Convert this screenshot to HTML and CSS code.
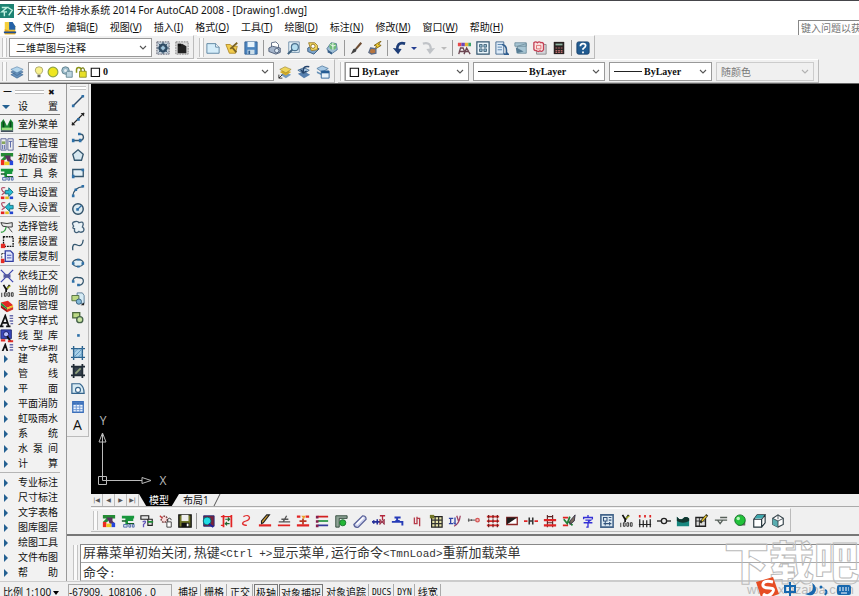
FILE: index.html
```html
<!DOCTYPE html>
<html lang="zh-CN">
<head>
<meta charset="utf-8">
<title>天正软件-给排水系统 2014 For AutoCAD 2008 - [Drawing1.dwg]</title>
<link rel="stylesheet" href="styles.css">
</head>
<body>
<svg class="defs" aria-hidden="true">
<symbol id="chev" viewBox="0 0 8 8"><path d="M1 2l3 3 3-3" fill="none" stroke="#555" stroke-width="1.1"/></symbol>
<symbol id="app" viewBox="0 0 16 16"><path d="M0 0h16v16H0z" fill="#1d8272"/><path d="M2 4h6L2 9h6M9 4l5 3-4 6M5 9v5" stroke="#bff0e0" stroke-width="1.6" fill="none"/></symbol>
<symbol id="doc" viewBox="0 0 16 16"><path d="M2 1h8l4 5v9H2z" fill="#f5cf3c"/><path d="M7 1h4l3 5v4H7z" fill="#2462a8"/><path d="M2 9l5 2 7 0v4H2z" fill="#e8a81c"/><path d="M1 13h14" stroke="#1e4f92" stroke-width="2"/></symbol>
<symbol id="gear" viewBox="0 0 16 16"><path d="M1 1h14v14H1z" fill="#c9d3dc" stroke="#556" stroke-dasharray="2 1"/><circle cx="8" cy="8" r="4" fill="none" stroke="#2c4963" stroke-width="2.5"/><path d="M8 1v14M1 8h14M3 3l10 10M13 3L3 13" stroke="#2c4963"/><circle cx="8" cy="8" r="2" fill="#9cc4de"/></symbol>
<symbol id="gearhome" viewBox="0 0 16 16"><path d="M1 1h14v14H1z" fill="#ddd" stroke="#777" stroke-dasharray="2 1"/><path d="M3 14V6l5-3 5 3v8z" fill="#222"/><path d="M3 3h4v3H3z" fill="#111"/></symbol>
<symbol id="new" viewBox="0 0 16 16"><path d="M1 3h10l4 4v7H1z" fill="#d5edfa" stroke="#557f9e"/><path d="M11 3v4h4" fill="#fff" stroke="#557f9e"/></symbol>
<symbol id="open" viewBox="0 0 16 16"><path d="M1 4h5l2 2h6l-2 8H5z" fill="#f1cb4c" stroke="#b08a2a"/><path d="M6 9l8-7M8 7l5 6" fill="none" stroke="#7c6423" stroke-width="2"/></symbol>
<symbol id="save" viewBox="0 0 16 16"><path d="M1 1h14v14H1z" fill="#4b84bf" stroke="#315f91"/><path d="M4 1h8v6H4z" fill="#e7f3fb"/><path d="M4 10h8v5H4z" fill="#cddfea"/><path d="M5 11h2v4H5z" fill="#315f91"/></symbol>
<symbol id="print" viewBox="0 0 16 16"><path d="M4 8V2l5-1 3 3v4" fill="#fff" stroke="#56657e"/><path d="M1 8l4-2 9 2v5l-5 2-8-3z" fill="#a4b4ca" stroke="#4a5a75"/><circle cx="10" cy="11" r="2.5" fill="#dbe7f2" stroke="#4a5a75"/></symbol>
<symbol id="preview" viewBox="0 0 16 16"><path d="M2 1h12v12H2z" fill="#e8f4fa" stroke="#6a8aa6"/><circle cx="9" cy="7" r="4" fill="#b5def0" stroke="#4b718f" stroke-width="1.4"/><path d="M6 10l-5 5" stroke="#3d607e" stroke-width="2.4"/></symbol>
<symbol id="publish" viewBox="0 0 16 16"><path d="M2 8l6-3 7 4-6 6-7-3z" fill="#7aa2c9" stroke="#38597d"/><path d="M3 2h7l3 3v5l-7 1z" fill="#f7dc60" stroke="#97782a"/><circle cx="8" cy="6" r="2.4" fill="#fff" stroke="#8a6d1c"/></symbol>
<symbol id="globe" viewBox="0 0 16 16"><path d="M2 9l5-7 6 1 1 7-7 5z" fill="#9dbdd5" stroke="#517799"/><circle cx="9" cy="6" r="4" fill="#6fbc77"/><path d="M6 4q3 3 6 1M9 2v8" stroke="#fff" fill="none"/><path d="M3 10l5 3v2l-5-2z" fill="#345b86"/></symbol>
<symbol id="brush" viewBox="0 0 16 16"><path d="M14 2L8 9" stroke="#6e4d33" stroke-width="2.4"/><path d="M9 8l-1 4-6 3 3-6z" fill="#444"/></symbol>
<symbol id="match" viewBox="0 0 16 16"><path d="M15 0L7 5l3 1-3 4 8-5-3-1z" fill="#f2cf33" stroke="#7c6012"/><path d="M3 8l6 1v5l-5 1-3-2z" fill="#b8763f" stroke="#596b89" stroke-width="1.500"/></symbol>
<symbol id="undo" viewBox="0 0 16 16"><path d="M15 3Q5 0 6 12" fill="none" stroke="#1e3d77" stroke-width="3"/><path d="M1 8l10 1-4 6z" fill="#1e3d77"/></symbol>
<symbol id="redo" viewBox="0 0 16 16"><path d="M1 3q10-3 9 9" fill="none" stroke="#c0c3c7" stroke-width="2.600"/><path d="M15 8L5 9l4 6z" fill="#c0c3c7"/></symbol>
<symbol id="down" viewBox="0 0 6 8"><path d="M0 3h6L3 6z" fill="#263f91"/></symbol>
<symbol id="downg" viewBox="0 0 6 8"><path d="M0 3h6L3 6z" fill="#bbb"/></symbol>
<symbol id="props" viewBox="0 0 16 16"><path d="M1 2h4v4H1z" fill="#e74949"/><path d="M5 2h4v4H5z" fill="#6a45bb"/><path d="M9 2h4v4H9z" fill="#eab532"/><path d="M13 2h3v4h-3z" fill="#3aa26a"/><path d="M2 15l2-7h3l2 5M8 15l3-7 4 7M2 12h12" fill="none" stroke="#6b4551" stroke-width="1.5"/></symbol>
<symbol id="dc" viewBox="0 0 16 16"><path d="M1 1h14v14H1z" fill="#eaf5fb" stroke="#34566f" stroke-width="1.4"/><path d="M4 4h3v3H4zM9 4h3v3H9zM4 9h3v3H4zM9 9h3v3H9z" fill="#91b8cb" stroke="#42647a"/></symbol>
<symbol id="tp" viewBox="0 0 16 16"><path d="M1 1h9v14H1z" fill="#dceaf7" stroke="#3f648c"/><path d="M3 4h5M3 7h5M3 10h5" stroke="#4f7dac"/><path d="M8 4q6 1 5 9l2 2h-5" fill="none" stroke="#315e8f" stroke-width="1.8"/></symbol>
<symbol id="sheet" viewBox="0 0 16 16"><path d="M1 2h13v4H1zM4 6l10-3v11H4z" fill="#a7c5d3" stroke="#71909f"/><path d="M2 7l9 5-8 2z" fill="#577d95"/></symbol>
<symbol id="markup" viewBox="0 0 16 16"><path d="M4 4h11v11H4z" fill="#d4d4da" stroke="#888"/><path d="M1 2q2-2 4 0 2-2 4 0 2-1 3 1v7q-2 3-4 1-2 2-4 0-3 0-3-2z" fill="#fbe4e4" stroke="#c44055" stroke-width="1.5"/><path d="M4 5h5v4H4z" fill="none" stroke="#d66"/></symbol>
<symbol id="calc" viewBox="0 0 16 16"><path d="M2 1h12v14H2z" fill="#292222"/><path d="M4 3h8v2H4z" fill="#8eb3a0"/><path d="M4 8h8M4 11h8M4 13h8" stroke="#b86b6b" stroke-width="1.4" stroke-dasharray="2 1"/></symbol>
<symbol id="help" viewBox="0 0 16 16"><rect x="1" y="1" width="14" height="14" rx="2" fill="#205b91" stroke="#173f69"/><path d="M5 6q0-3 3-3t3 2.5q0 1.5-3 3.500V10M8 12v2" fill="none" stroke="#fff" stroke-width="2"/></symbol>
<symbol id="layers" viewBox="0 0 16 16"><path d="M1 11l7-3 7 3-7 4zM1 8l7-3 7 3-7 4z" fill="#6590bb" stroke="#3d6691" stroke-width=".7"/><path d="M1 5l7-3 7 3-7 4z" fill="#b3d5ec" stroke="#5680a8" stroke-width=".7"/></symbol>
<symbol id="bulb" viewBox="0 0 12 16"><path d="M4 11Q1 8 1 5.500Q1 1 6 1t5 4.500Q11 8 8 11z" fill="#f8f18d" stroke="#9a9656"/><path d="M4 12h4v3H4z" fill="#666"/></symbol>
<symbol id="sun" viewBox="0 0 16 16"><circle cx="8" cy="8" r="6.500" fill="#efe61f" stroke="#8fa447" stroke-width="1.600"/></symbol>
<symbol id="vp" viewBox="0 0 16 16"><circle cx="6" cy="6" r="5" fill="#9dbccb" stroke="#4f7482"/><path d="M7 7h8v8H7z" fill="#bcd4df" stroke="#4f7482"/><circle cx="6" cy="6" r="2" fill="#e5eef2"/></symbol>
<symbol id="lock" viewBox="0 0 16 16"><path d="M2 9V5q0-3 3-3t3 3v3" fill="none" stroke="#8b9416" stroke-width="2"/><path d="M6 7h9v8H6z" fill="#e8df28" stroke="#7c801a"/><path d="M8 4q4-4 5 3" fill="none" stroke="#778017" stroke-width="1.500"/></symbol>
<symbol id="box" viewBox="0 0 16 16"><path d="M3 3h11v11H3z" fill="#fff" stroke="#111" stroke-width="1.5"/></symbol>
<symbol id="lay1" viewBox="0 0 16 16"><path d="M3 11l5-3 7 3-6 4z" fill="#7499bd"/><path d="M2 8l6-3 7 3-6 4z" fill="#d3aa26"/><path d="M2 5l6-3 7 3-6 4z" fill="#efd65c" stroke="#8c7423" stroke-width=".6"/><path d="M1 15l4-4M1 11v4h4" stroke="#222" fill="none"/></symbol>
<symbol id="lay2" viewBox="0 0 16 16"><path d="M1 10l7-3 7 4-7 4z" fill="#567fae"/><path d="M1 6l7-3 6 3-6 4z" fill="#aac9e4" stroke="#41698f"/><path d="M14 2q-7-2-7 6M4 5l3 4 4-2" fill="none" stroke="#23426b" stroke-width="1.7"/></symbol>
<symbol id="lay3" viewBox="0 0 16 16"><path d="M1 4l6-3 7 3-7 4z" fill="#a9cae5" stroke="#5c84a8"/><path d="M1 7l6 3v2L1 9z" fill="#6590b7"/><path d="M6 7h9v8H6z" fill="#e8f2fa" stroke="#245c94"/><path d="M6 8h9" stroke="#245c94" stroke-width="3"/></symbol>
<symbol id="tri" viewBox="0 0 8 10"><path d="M2 1l4 4-4 4z" fill="#246091"/></symbol>
<symbol id="trid" viewBox="0 0 8 10"><path d="M0 3h8L4 7z" fill="#246091"/></symbol>
<symbol id="s-out" viewBox="0 0 16 16"><path d="M1 14V5l3-4 4 8 4-8 3 4v9z" fill="#1c8a36"/><path d="M4 4v7M12 4v7" stroke="#0a461a" stroke-width="2"/><path d="M2 11h12v3H2z" fill="#96da7c"/><path d="M1 15h14" stroke="#123" stroke-width="1.5"/></symbol>
<symbol id="s-proj" viewBox="0 0 16 16"><path d="M1 2h6v13H1zM9 2h6v13H9z" fill="#eee" stroke="#515c93"/><path d="M2 5h4v3H2z" fill="#86a65b"/><path d="M3 9v5M5 9v5M10 5h4M12 5v7" stroke="#4c5ba4"/></symbol>
<symbol id="s-init" viewBox="0 0 16 16"><path d="M1 1h14v4H9L6 9H1l4-4H1z" fill="#248b34"/><path d="M5 4h7v4l3 3H9L7 7z" fill="#5a315e"/><path d="M1 9h4v6H1z" fill="#ec2b20"/><path d="M5 11h6v4H5z" fill="#f0cb20"/><path d="M11 10h4v5h-4z" fill="#2546dc"/></symbol>
<symbol id="s-tool" viewBox="0 0 16 16"><path d="M1 2h14v3H1zM5 5h9v3H8v4H5z" fill="#18963c"/><path d="M1 8h5M7 11h8" stroke="#135b27" stroke-width="1.5"/><path d="M3 12h4v3H3zM9 12h2v3H9zM13 12h2v3h-2z" fill="#d7e3ec" stroke="#4962a6"/></symbol>
<symbol id="s-exp" viewBox="0 0 16 16"><path d="M6 2Q1 1 2 4t3 3-3 3" fill="none" stroke="#b34f68" stroke-width="1.400"/><path d="M6 5h4V2l5 5-5 5V9H6z" fill="#28bad1" stroke="#126a79"/><path d="M1 12h4v3H1z" fill="#e32222"/><path d="M6 12h4v3H6z" fill="#e6bd1b"/><path d="M11 12h4v3h-4z" fill="#2244cf"/></symbol>
<symbol id="s-imp" viewBox="0 0 16 16"><path d="M6 2Q1 1 2 4t3 3-3 3" fill="none" stroke="#b34f68" stroke-width="1.400"/><path d="M15 5h-4V2L6 7l5 5V9h4z" fill="#28bad1" stroke="#126a79"/><path d="M1 12h4v3H1z" fill="#e32222"/><path d="M6 12h4v3H6z" fill="#e6bd1b"/><path d="M11 12h4v3h-4z" fill="#2244cf"/></symbol>
<symbol id="s-pick" viewBox="0 0 16 16"><path d="M1 3l7 1 6-1v5H9L3 7z" fill="#e8e8e8" stroke="#222"/><path d="M1 14q5 0 6-6" fill="none" stroke="#38a348" stroke-width="1.500"/><path d="M9 8l5 6" stroke="#333"/></symbol>
<symbol id="s-floor" viewBox="0 0 16 16"><path d="M4 2h11v11H4z" fill="none" stroke="#111" stroke-width="1.500" stroke-dasharray="2 1"/><path d="M1 10h5v5H1z" fill="#e32c24"/></symbol>
<symbol id="s-copy" viewBox="0 0 16 16"><path d="M2 4h7v9H2z" fill="#fff" stroke="#333" stroke-dasharray="2 1"/><path d="M6 1h6l3 3v9H6z" fill="#dfe4fb" stroke="#2f3ca2" stroke-width="1.500"/><path d="M8 6h5M8 9h5" stroke="#2f3ca2"/><path d="M1 10h4v5H1z" fill="#e32c24"/></symbol>
<symbol id="s-cross" viewBox="0 0 16 16"><path d="M1 1l14 14M15 1L1 15" stroke="#3d46af" stroke-width="1.500"/><path d="M4 6h8v4H4z" fill="#53599f"/></symbol>
<symbol id="s-scale" viewBox="0 0 16 16"><path d="M4 1l3 5M11 1L7 7v2" stroke="#111" stroke-width="2" fill="none"/><path d="M8 5l4-3" stroke="#a8b229" stroke-width="1.500"/><path d="M2 10v5M5 10h2v4H5zM9 10h2v4H9zM13 10h2v4h-2z" stroke="#222" fill="none"/></symbol>
<symbol id="s-lay" viewBox="0 0 16 16"><path d="M1 4l8-2 6 5-7 3z" fill="#df2822"/><path d="M1 4l7 6v2L1 7z" fill="#1a9638"/><path d="M8 10l7-3v2l-7 3z" fill="#efc722"/><path d="M1 7l7 5v3L1 10z" fill="#a11616"/><path d="M8 12l7-3v3l-7 3z" fill="#d53221"/></symbol>
<symbol id="s-text" viewBox="0 0 16 16"><path d="M1 14L6 2l4 12M3 10h6M0 14h4M7 14h5" fill="none" stroke="#111" stroke-width="2"/><path d="M11 2h4M11 5h4M11 8h4M12 11h3" stroke="#6668aa" stroke-width="1.500"/></symbol>
<symbol id="s-lib" viewBox="0 0 16 16"><path d="M1 1h12v10H1z" fill="#3947b9" stroke="#1e276f"/><circle cx="7" cy="6" r="3" fill="#bac1ff" stroke="#101556"/><path d="M8 8l4 6" stroke="#111" stroke-width="2"/><path d="M1 13h5M9 14h6" stroke="#e02c26" stroke-width="2.500"/></symbol>
<symbol id="d-line" viewBox="0 0 16 16"><path d="M2 14L14 2" stroke="#2b4866" stroke-width="1.600"/><path d="M1 12h3v3H1zM12 1h3v3h-3z" fill="#2e70a8"/></symbol>
<symbol id="d-xline" viewBox="0 0 16 16"><path d="M1 15L15 1" stroke="#222" stroke-width="1.600"/><path d="M1 11v4h4zM11 1h4v4z" fill="#222"/><path d="M7 7h3v3H7z" fill="#2e70a8"/></symbol>
<symbol id="d-pl" viewBox="0 0 16 16"><path d="M2 12h9q4-1 3-5-1-3-4-2" fill="none" stroke="#35576f" stroke-width="1.600"/><path d="M1 10h3v4H1zM9 10h3v4H9zM8 3h3v3H8z" fill="#2e70a8"/></symbol>
<symbol id="d-poly" viewBox="0 0 16 16"><path d="M8 2l6 5-2 7H4L2 7z" fill="#d7e7ef" stroke="#35576f" stroke-width="1.500"/></symbol>
<symbol id="d-rect" viewBox="0 0 16 16"><path d="M2 4h12v8H2z" fill="#e4f0f6" stroke="#35576f" stroke-width="1.500"/><path d="M1 10h3v4H1zM12 3h3v3h-3z" fill="#2e70a8"/></symbol>
<symbol id="d-arc" viewBox="0 0 16 16"><path d="M2 14Q3 4 14 3" fill="none" stroke="#35576f" stroke-width="1.500"/><path d="M1 12h3v3H1zM4 5h3v3H4zM12 1h3v3h-3z" fill="#2e70a8"/></symbol>
<symbol id="d-circ" viewBox="0 0 16 16"><circle cx="8" cy="8" r="6" fill="#dceaf0" stroke="#2f5068" stroke-width="1.600"/><path d="M7 9l5-5" stroke="#2e70a8" stroke-width="1.500"/><path d="M6 7h3v3H6z" fill="#2e70a8"/></symbol>
<symbol id="d-cloud" viewBox="0 0 16 16"><path d="M3 7Q0 3 4 2t5 1q5-2 5 2l-1 3q3 2 1 5-3 2-5 0-3 3-5 0l0-3Q1 10 3 7z" fill="#eaf2f6" stroke="#44627a" stroke-width="1.500"/></symbol>
<symbol id="d-spl" viewBox="0 0 16 16"><path d="M2 14Q1 5 7 8t7-6" fill="none" stroke="#35576f" stroke-width="1.500"/></symbol>
<symbol id="d-ell" viewBox="0 0 16 16"><ellipse cx="8" cy="8" rx="6" ry="4" fill="#e4f0f6" stroke="#35576f" stroke-width="1.500"/><path d="M1 7h3v3H1zM12 7h3v3h-3zM7 3h3v2H7zM7 11h3v2H7z" fill="#2e70a8"/></symbol>
<symbol id="d-ea" viewBox="0 0 16 16"><path d="M2 8q1-5 6-4 7 0 6 5-1 4-6 4" fill="none" stroke="#35576f" stroke-width="1.500"/><path d="M1 7h3v3H1zM7 11h3v3H7z" fill="#2e70a8"/></symbol>
<symbol id="d-ins" viewBox="0 0 16 16"><path d="M7 1h6l2 3v9H7z" fill="#d6ebf5" stroke="#527590"/><path d="M1 4h8v6H1z" fill="#bcd984" stroke="#4b693b"/><circle cx="9" cy="11" r="3" fill="#82b8d7" stroke="#315978"/><path d="M11 15l4-3v3z" fill="#222"/></symbol>
<symbol id="d-blk" viewBox="0 0 16 16"><path d="M2 3h8v6H2z" fill="#bcd984" stroke="#4b693b" stroke-width="1.500"/><circle cx="10" cy="11" r="3.500" fill="#c8e3a0" stroke="#44624a" stroke-width="1.500"/></symbol>
<symbol id="d-pt" viewBox="0 0 16 16"><path d="M7 7h3v3H7z" fill="#2e70a8"/></symbol>
<symbol id="d-hat" viewBox="0 0 16 16"><path d="M3 3h10v10H3z" fill="#a8d0e8"/><path d="M0 3h16M0 13h16M3 0v16M13 0v16" stroke="#2b638f" stroke-width="1.600"/><path d="M3 8l5-5M3 13L13 3M8 13l5-5" stroke="#5b93bf"/></symbol>
<symbol id="d-gra" viewBox="0 0 16 16"><path d="M3 3h10v10H3z" fill="#34404c"/><path d="M0 3h16M0 13h16M3 0v16M13 0v16" stroke="#202b35" stroke-width="2"/><path d="M5 11l6-6" stroke="#91a27b" stroke-width="2"/></symbol>
<symbol id="d-reg" viewBox="0 0 16 16"><path d="M1 13V2h9q5 3 5 11z" fill="#d7eaf3" stroke="#35648c" stroke-width="1.400"/><circle cx="8" cy="9" r="2.800" fill="#fff" stroke="#35648c" stroke-width="1.300"/></symbol>
<symbol id="d-tab" viewBox="0 0 16 16"><path d="M2 2h12v12H2z" fill="#eff6ff" stroke="#3b6fba" stroke-width="1.500"/><path d="M2 4h12" stroke="#3b6fba" stroke-width="3"/><path d="M2 8h12M2 11h12M6 4v10M10 4v10" stroke="#6994d2"/></symbol>
<symbol id="b3" viewBox="0 0 16 16"><path d="M1 2h9v4H1zM9 6h5v7H9z" fill="#e8e8e8" stroke="#222" stroke-width="1.300"/><path d="M9 9h6" stroke="#1f8b36" stroke-width="2"/><path d="M3 9q4-2 3 1l-2 2v3" fill="none" stroke="#6455bb" stroke-width="1.500"/></symbol>
<symbol id="b4" viewBox="0 0 16 16"><circle cx="6" cy="6" r="3.500" fill="#f8dcdc" stroke="#7c4343" stroke-dasharray="2 1" stroke-width="1.600"/><path d="M1 2l3 3" stroke="#c53636" stroke-width="1.500"/><path d="M9 9h5v6H9z" fill="#fff" stroke="#333"/><path d="M10 9V6q3-3 4 1" fill="none" stroke="#333"/></symbol>
<symbol id="b5" viewBox="0 0 16 16"><path d="M1 1h14v14H1z" fill="#70762a" stroke="#111" stroke-width="1.600"/><path d="M4 1h8v7H4z" fill="#eee"/><path d="M4 10h9v5H4z" fill="#111"/><path d="M10 11h2v3h-2z" fill="#fff"/></symbol>
<symbol id="b6" viewBox="0 0 16 16"><path d="M3 2h12v12H3z" fill="#7a2139" stroke="#222b77"/><circle cx="7" cy="8" r="4.500" fill="#20dce5" stroke="#0c5961"/><path d="M9 11l5 4" stroke="#20209c" stroke-width="2"/></symbol>
<symbol id="b7" viewBox="0 0 16 16"><path d="M4 1v14M13 1v14" stroke="#e22424" stroke-width="2"/><path d="M1 3h12M1 13h3" stroke="#e22424" stroke-width="1.500"/><path d="M6 6h5M6 11h5M9 4l2 2-2 2M8 9l-2 2 2 2" stroke="#1d682f" fill="none" stroke-width="1.300"/></symbol>
<symbol id="b8" viewBox="0 0 16 16"><path d="M5 3q6-3 7 1 0 3-4 4t-4 3q1 2 5 2" fill="none" stroke="#e12e2e" stroke-width="1.400"/></symbol>
<symbol id="b9" viewBox="0 0 16 16"><path d="M1 13h14" stroke="#e22424" stroke-width="2.500"/><path d="M13 1L6 10l-2 1V8l6-7z" fill="#d7a132" stroke="#222" stroke-width="1.300"/></symbol>
<symbol id="b10" viewBox="0 0 16 16"><path d="M1 13h14" stroke="#e22424" stroke-width="2"/><path d="M2 9h13M5 6h8M7 9l4-7" stroke="#555" stroke-width="1.500"/></symbol>
<symbol id="b11" viewBox="0 0 16 16"><path d="M1 3h4M11 3h4M1 13h14" stroke="#e22424" stroke-width="2.500"/><path d="M4 8h8M8 5v7" stroke="#b73723" stroke-width="2"/><path d="M6 2h5l-2 4z" fill="#eba028"/></symbol>
<symbol id="b12" viewBox="0 0 16 16"><path d="M3 3h12" stroke="#d32020" stroke-width="2"/><path d="M3 8h12" stroke="#299544" stroke-width="2"/><path d="M3 13h12" stroke="#333a99" stroke-width="2"/><path d="M1 2h3v3H1zM1 7h3v3H1zM1 12h3v3H1z" fill="#851f4e"/></symbol>
<symbol id="b13" viewBox="0 0 16 16"><path d="M2 15V2h13v3H6v10z" fill="#8fa396" stroke="#2c4536"/><circle cx="10" cy="10" r="3.500" fill="#24b736" stroke="#14702a"/></symbol>
<symbol id="b14" viewBox="0 0 16 16"><path d="M1 12L11 2q4 0 4 4L6 15q-4 1-5-3z" fill="#cdd2ee" stroke="#596198" stroke-width="1.400"/><path d="M4 12l8-8" stroke="#fff" stroke-width="2"/></symbol>
<symbol id="b15" viewBox="0 0 16 16"><path d="M0 9h10M2 7v4M6 6v6" stroke="#252e99" stroke-width="1.800"/><path d="M9 6v6l5-6v6z" fill="#cc5c74" stroke="#882b42"/><path d="M12 2v5M9 2h6" stroke="#b3263b" stroke-width="1.500"/></symbol>
<symbol id="b16" viewBox="0 0 16 16"><path d="M1 9h12v4M7 9V4M4 4h7M5 8h5" fill="none" stroke="#263bb7" stroke-width="2.200"/></symbol>
<symbol id="b17" viewBox="0 0 16 16"><path d="M5 4v7h3V3M8 5h3v9" fill="none" stroke="#b63b4a" stroke-width="1.500"/></symbol>
<symbol id="b18" viewBox="0 0 16 16"><path d="M3 3h12v12H3z" fill="#e7e4aa" stroke="#222" stroke-width="1.400"/><path d="M3 7h12M3 11h12M7 3v12M11 3v12" stroke="#333" stroke-width="1.400"/><path d="M1 1h5v4H1z" fill="#737627"/></symbol>
<symbol id="b19" viewBox="0 0 16 16"><path d="M1 5h5M3 5v6M1 11h5M8 4v8" stroke="#2f43a8" stroke-width="1.500"/><path d="M7 14Q13 11 14 2M10 2l2 6" fill="none" stroke="#9f4262" stroke-width="1.500"/><path d="M6 10l4 2" stroke="#2f43a8"/></symbol>
<symbol id="b20" viewBox="0 0 16 16"><path d="M1 7h9" stroke="#777" stroke-width="1.500"/><path d="M2 5v4M5 6v2" stroke="#444"/><circle cx="12" cy="7" r="2" fill="#f7baba" stroke="#d45757" stroke-width="1.500"/></symbol>
<symbol id="b21" viewBox="0 0 16 16"><path d="M1 3h14M1 8h14M1 13h14" stroke="#d92b2b" stroke-width="2"/><path d="M3 1v4M8 1v4M13 1v4M3 6v4M8 6v4M13 6v4M3 11v4M8 11v4M13 11v4" stroke="#722020" stroke-width="1.500"/></symbol>
<symbol id="b22" viewBox="0 0 16 16"><path d="M2 4h12v8H2z" fill="#fff" stroke="#8d2525" stroke-width="1.500"/><path d="M2 4h12L2 12z" fill="#211c1c"/></symbol>
<symbol id="b23" viewBox="0 0 16 16"><path d="M0 8h4M12 8h4" stroke="#df2424" stroke-width="2"/><path d="M6 4v8M10 4v8M6 8h4" stroke="#333" stroke-width="1.800"/></symbol>
<symbol id="b24" viewBox="0 0 16 16"><path d="M5 1v14M11 1v14M5 3h6M5 10h6" stroke="#5e2424" stroke-width="1.300"/><path d="M1 7h14M1 13h14" stroke="#df2424" stroke-width="2.500"/></symbol>
<symbol id="b25" viewBox="0 0 16 16"><path d="M1 4h6M1 13h6" stroke="#df2424" stroke-width="2"/><path d="M2 6l4 5 3-8M8 9l4 4" fill="none" stroke="#1f7d34" stroke-width="2"/><path d="M15 1L9 8v4l5-4z" fill="#7b6b5e" stroke="#332f44"/></symbol>
<symbol id="b26" viewBox="0 0 16 16"><path d="M8 1v2M3 6V4h10v2M5 7h6L8 9M3 10h10M8 9v6H6" fill="none" stroke="#3430d5" stroke-width="1.500"/></symbol>
<symbol id="b27" viewBox="0 0 16 16"><path d="M1 1h14v14H1z" fill="#ddeaf3" stroke="#43648a" stroke-width="1.800"/><path d="M4 4h4v4H4zM10 4h3M10 7h3M4 11h9M6 8v5M11 9v4" fill="none" stroke="#32537c" stroke-width="1.200"/></symbol>
<symbol id="b29" viewBox="0 0 16 16"><path d="M2 6v9M6 7v8M10 7v8M14 6v9M1 12h14" stroke="#222" stroke-width="1.400"/><path d="M1 1h2v3H1zM7 1h2v3H7zM13 1h2v3h-2z" fill="#df2424"/></symbol>
<symbol id="b30" viewBox="0 0 16 16"><path d="M0 8h16" stroke="#222" stroke-width="1.500"/><circle cx="8" cy="8" r="3" fill="#eee" stroke="#222" stroke-width="1.500"/></symbol>
<symbol id="b31" viewBox="0 0 16 16"><path d="M1 3q4 5 7 2t7 0v9H1z" fill="#17877f"/><path d="M1 3q4 5 7 2t7 0v3q-7 4-14 0z" fill="#12362f"/></symbol>
<symbol id="b32" viewBox="0 0 16 16"><path d="M1 4h11v10H1z" fill="#ddd" stroke="#222" stroke-width="1.500"/><path d="M1 8h11M5 4v10" stroke="#222"/><path d="M14 1L6 10" stroke="#2c2b19" stroke-width="3"/><path d="M13 2L8 8" stroke="#e7c431" stroke-width="1.500"/></symbol>
<symbol id="b33" viewBox="0 0 16 16"><path d="M1 7h14M4 7l3 4 3-4M7 4h8" fill="none" stroke="#57605a" stroke-width="1.500"/></symbol>
<symbol id="b34" viewBox="0 0 16 16"><path d="M5 13h9V8z" fill="#666"/><circle cx="8" cy="7" r="6" fill="#22c23a" stroke="#126c27"/><circle cx="6" cy="5" r="2" fill="#b7f5bb"/></symbol>
<symbol id="b35" viewBox="0 0 16 16"><path d="M2 6h9v9H2zM2 6l4-5h9l-4 5M15 1v9l-4 5" fill="#fff" stroke="#223239" stroke-width="1.300"/><path d="M3 5l3-4h8l-3 4z" fill="#3ba7ac"/></symbol>
<symbol id="b36" viewBox="0 0 16 16"><path d="M8 1l6 4v7l-6 3-6-3V5z" fill="#fff" stroke="#334148" stroke-width="1.300"/><path d="M2 5l6 3v7l-6-3z" fill="#59adb0"/><path d="M2 5l6 3 6-3M8 8v7M8 1v5" fill="none" stroke="#334148"/></symbol>
</svg>

<header class="titlebar"><svg class="i14"><use href="#app"/></svg><h1>天正软件-给排水系统 2014 For AutoCAD 2008 - [Drawing1.dwg]</h1></header>

<nav class="menubar">
<svg class="i14"><use href="#doc"/></svg>
<div class="menus">
<button>文件(<u>F</u>)</button><button>编辑(<u>E</u>)</button><button>视图(<u>V</u>)</button><button>插入(<u>I</u>)</button><button>格式(<u>O</u>)</button><button>工具(<u>T</u>)</button><button>绘图(<u>D</u>)</button><button>标注(<u>N</u>)</button><button>修改(<u>M</u>)</button><button>窗口(<u>W</u>)</button><button>帮助(<u>H</u>)</button>
</div>
<input class="ask" type="text" aria-label="键入问题以获取帮助" placeholder="键入问题以获取帮助">
</nav>

<div class="bars">
<div class="bar-row">
<div class="bar"><span class="grip"></span>
<div class="combo c-space"><select class="cn" aria-label="工作空间"><option>二维草图与注释</option></select><svg class="i8"><use href="#chev"/></svg></div>
<div class="icons tail"><button aria-label="工作空间设置"><svg><use href="#gear"/></svg></button><button aria-label="我的工作空间"><svg><use href="#gearhome"/></svg></button></div>
</div>
<div class="bar"><span class="grip"></span>
<div class="icons std"><button aria-label="新建"><svg><use href="#new"/></svg></button><button aria-label="打开"><svg><use href="#open"/></svg></button><button aria-label="保存"><svg><use href="#save"/></svg></button><i></i><button aria-label="打印"><svg><use href="#print"/></svg></button><button aria-label="打印预览"><svg><use href="#preview"/></svg></button><button aria-label="发布"><svg><use href="#publish"/></svg></button><button aria-label="三维"><svg><use href="#globe"/></svg></button><i></i><button aria-label="特性刷"><svg><use href="#brush"/></svg></button><button aria-label="块编辑"><svg><use href="#match"/></svg></button><i></i><button aria-label="放弃"><svg><use href="#undo"/></svg></button><button class="drop" aria-label="放弃列表"><svg><use href="#down"/></svg></button><button aria-label="重做"><svg><use href="#redo"/></svg></button><button class="drop" aria-label="重做列表"><svg><use href="#downg"/></svg></button><i></i><button aria-label="特性"><svg><use href="#props"/></svg></button><button aria-label="设计中心"><svg><use href="#dc"/></svg></button><button aria-label="工具选项板"><svg><use href="#tp"/></svg></button><button aria-label="图纸集"><svg><use href="#sheet"/></svg></button><button aria-label="标记集"><svg><use href="#markup"/></svg></button><button aria-label="计算器"><svg><use href="#calc"/></svg></button><i></i><button aria-label="帮助"><svg><use href="#help"/></svg></button></div>
</div>
</div>
<div class="bar-row">
<div class="bar"><span class="grip"></span>
<div class="icons first"><button aria-label="图层特性"><svg><use href="#layers"/></svg></button></div>
<div class="combo c-layer"><svg class="i12"><use href="#bulb"/></svg><svg class="i12"><use href="#sun"/></svg><svg class="i12"><use href="#vp"/></svg><svg class="i12"><use href="#lock"/></svg><svg class="i12"><use href="#box"/></svg><select aria-label="图层"><option>0</option></select><svg class="i8"><use href="#chev"/></svg></div>
<div class="icons tail"><button aria-label="置为当前"><svg><use href="#lay1"/></svg></button><button aria-label="上一个图层"><svg><use href="#lay2"/></svg></button><button aria-label="图层状态"><svg><use href="#lay3"/></svg></button></div>
</div>
<div class="bar"><span class="grip"></span>
<div class="combo c-color"><svg class="i12"><use href="#box"/></svg><select aria-label="颜色"><option>ByLayer</option></select><svg class="i8"><use href="#chev"/></svg></div>
<div class="combo c-type"><span class="rule long"></span><select aria-label="线型"><option>ByLayer</option></select><svg class="i8"><use href="#chev"/></svg></div>
<div class="combo c-weight"><span class="rule"></span><select aria-label="线宽"><option>ByLayer</option></select><svg class="i8"><use href="#chev"/></svg></div>
<div class="combo c-plot off"><select class="cn" aria-label="打印样式" disabled><option>随颜色</option></select><svg class="i8"><use href="#chev"/></svg></div>
</div>
</div>
</div>

<div class="main">
<aside class="side">
<div class="side-head"><button aria-label="最小化">━</button><span></span><button aria-label="关闭">✖</button></div>
<div class="top group"><button class="row"><svg class="mark"><use href="#trid"/></svg><span>设 置</span></button></div>
<div class="group"><button class="row"><svg><use href="#s-out"/></svg><span>室外菜单</span></button></div>
<div class="group"><button class="row"><svg><use href="#s-proj"/></svg><span>工程管理</span></button><button class="row"><svg><use href="#s-init"/></svg><span>初始设置</span></button><button class="row"><svg><use href="#s-tool"/></svg><span>工 具 条</span></button></div>
<div class="group"><button class="row"><svg><use href="#s-exp"/></svg><span>导出设置</span></button><button class="row"><svg><use href="#s-imp"/></svg><span>导入设置</span></button></div>
<div class="group"><button class="row"><svg><use href="#s-pick"/></svg><span>选择管线</span></button><button class="row"><svg><use href="#s-floor"/></svg><span>楼层设置</span></button><button class="row"><svg><use href="#s-copy"/></svg><span>楼层复制</span></button></div>
<div class="group cut"><button class="row"><svg><use href="#s-cross"/></svg><span>依线正交</span></button><button class="row"><svg><use href="#s-scale"/></svg><span>当前比例</span></button><button class="row"><svg><use href="#s-lay"/></svg><span>图层管理</span></button><button class="row"><svg><use href="#s-text"/></svg><span>文字样式</span></button><button class="row"><svg><use href="#s-lib"/></svg><span>线 型 库</span></button><button class="row part"><svg><use href="#s-text"/></svg><span>文字线型</span></button></div>
<div class="group"><button class="row"><svg class="mark"><use href="#tri"/></svg><span>建 筑</span></button><button class="row"><svg class="mark"><use href="#tri"/></svg><span>管 线</span></button><button class="row"><svg class="mark"><use href="#tri"/></svg><span>平 面</span></button><button class="row"><svg class="mark"><use href="#tri"/></svg><span>平面消防</span></button><button class="row"><svg class="mark"><use href="#tri"/></svg><span>虹吸雨水</span></button><button class="row"><svg class="mark"><use href="#tri"/></svg><span>系 统</span></button><button class="row"><svg class="mark"><use href="#tri"/></svg><span>水 泵 间</span></button><button class="row"><svg class="mark"><use href="#tri"/></svg><span>计 算</span></button></div>
<div class="group last"><button class="row"><svg class="mark"><use href="#tri"/></svg><span>专业标注</span></button><button class="row"><svg class="mark"><use href="#tri"/></svg><span>尺寸标注</span></button><button class="row"><svg class="mark"><use href="#tri"/></svg><span>文字表格</span></button><button class="row"><svg class="mark"><use href="#tri"/></svg><span>图库图层</span></button><button class="row"><svg class="mark"><use href="#tri"/></svg><span>绘图工具</span></button><button class="row"><svg class="mark"><use href="#tri"/></svg><span>文件布图</span></button><button class="row"><svg class="mark"><use href="#tri"/></svg><span>帮 助</span></button></div>
</aside>

<div class="right">
<div class="work">
<div class="draw">
<span class="hgrip"></span>
<button aria-label="直线"><svg><use href="#d-line"/></svg></button><button aria-label="构造线"><svg><use href="#d-xline"/></svg></button><button aria-label="多段线"><svg><use href="#d-pl"/></svg></button><button aria-label="正多边形"><svg><use href="#d-poly"/></svg></button><button aria-label="矩形"><svg><use href="#d-rect"/></svg></button><button aria-label="圆弧"><svg><use href="#d-arc"/></svg></button><button aria-label="圆"><svg><use href="#d-circ"/></svg></button><button aria-label="修订云线"><svg><use href="#d-cloud"/></svg></button><button aria-label="样条曲线"><svg><use href="#d-spl"/></svg></button><button aria-label="椭圆"><svg><use href="#d-ell"/></svg></button><button aria-label="椭圆弧"><svg><use href="#d-ea"/></svg></button><button aria-label="插入块"><svg><use href="#d-ins"/></svg></button><button aria-label="创建块"><svg><use href="#d-blk"/></svg></button><button aria-label="点"><svg><use href="#d-pt"/></svg></button><button aria-label="图案填充"><svg><use href="#d-hat"/></svg></button><button aria-label="渐变色"><svg><use href="#d-gra"/></svg></button><button aria-label="面域"><svg><use href="#d-reg"/></svg></button><button aria-label="表格"><svg><use href="#d-tab"/></svg></button><button class="mtext" aria-label="多行文字">A</button>
</div>
<div class="view">
<div class="canvas">
<svg class="ucs" viewBox="0 0 84 82"><g fill="none" stroke="#bbb"><path d="M7.500 64.500h8v8h-8zM11.500 68.500V22M11.500 68.500H51M11.500 21l-3.500 9h7zM60 68.500l-9-3v6z"/></g><text x="12" y="13">Y</text><text x="72" y="73">X</text></svg>
</div>
<div class="tabs"><button class="nav">|◀</button><button class="nav">◀</button><button class="nav">▶</button><button class="nav">▶|</button><button class="tab model">模型</button><button class="tab">布局1</button><svg class="slash" viewBox="0 0 8 12"><path d="M1 12L7 0" stroke="#555"/></svg></div>
<div class="bottom"><div class="bar"><span class="grip"></span>
<div class="icons wide"><button aria-label="初始设置"><svg><use href="#s-init"/></svg></button><button aria-label="工具条"><svg><use href="#s-tool"/></svg></button><button aria-label="图层转换"><svg><use href="#b3"/></svg></button><button aria-label="解锁"><svg><use href="#b4"/></svg></button><button aria-label="存盘"><svg><use href="#b5"/></svg></button><i></i><button aria-label="查询"><svg><use href="#b6"/></svg></button><button aria-label="间距"><svg><use href="#b7"/></svg></button><button aria-label="曲线"><svg><use href="#b8"/></svg></button><button aria-label="修改管线"><svg><use href="#b9"/></svg></button><button aria-label="管线标高"><svg><use href="#b10"/></svg></button><button aria-label="管线打断"><svg><use href="#b11"/></svg></button><button aria-label="多管线"><svg><use href="#b12"/></svg></button><button aria-label="立管"><svg><use href="#b13"/></svg></button><button aria-label="管道"><svg><use href="#b14"/></svg></button><button aria-label="阀门"><svg><use href="#b15"/></svg></button><button aria-label="水龙头"><svg><use href="#b16"/></svg></button><button aria-label="附件"><svg><use href="#b17"/></svg></button><button aria-label="材料表"><svg><use href="#b18"/></svg></button><button aria-label="系统图"><svg><use href="#b19"/></svg></button><button aria-label="喷头"><svg><use href="#b20"/></svg></button><button aria-label="喷淋布置"><svg><use href="#b21"/></svg></button><button aria-label="消火栓"><svg><use href="#b22"/></svg></button><button aria-label="断管"><svg><use href="#b23"/></svg></button><button aria-label="管径"><svg><use href="#b24"/></svg></button><button aria-label="标注刷"><svg><use href="#b25"/></svg></button><button aria-label="文字"><svg><use href="#b26"/></svg></button><button aria-label="图框"><svg><use href="#b27"/></svg></button><button aria-label="比例"><svg><use href="#s-scale"/></svg></button><button aria-label="尺寸"><svg><use href="#b29"/></svg></button><button aria-label="连接"><svg><use href="#b30"/></svg></button><button aria-label="水面"><svg><use href="#b31"/></svg></button><button aria-label="编辑表"><svg><use href="#b32"/></svg></button><button aria-label="标高"><svg><use href="#b33"/></svg></button><button aria-label="渲染"><svg><use href="#b34"/></svg></button><button aria-label="三维视图"><svg><use href="#b35"/></svg></button><button aria-label="轴测"><svg><use href="#b36"/></svg></button></div>
</div></div>
</div>
</div>
<div class="cmd"><span class="grip"></span>
<div class="cmd-box"><p>屏幕菜单初始关闭<code>,</code>热键<code>&lt;Ctrl +&gt;</code>显示菜单<code>,</code>运行命令<code>&lt;TmnLoad&gt;</code>重新加载菜单</p>
<div class="prompt"><label for="cmd">命令<code>:</code></label><input id="cmd" type="text"></div></div>
</div>
</div>
</div>

<footer class="status">
<button class="ratio">比例 1:100 <svg class="i8"><path d="M1 2h6L4 6z"/></svg></button>
<output class="coord">-67909,&nbsp; 108106 , 0</output>
<button>捕捉</button><button>栅格</button><button>正交</button><button class="on">极轴</button><button class="on">对象捕捉</button><button>对象追踪</button><button class="code">DUCS</button><button class="code">DYN</button><button>线宽</button>
</footer>

<div class="overlay">
<span class="site">www.xiazaiba.com</span>
<span class="mark-text">下载吧</span>
<div class="ime"><svg viewBox="0 0 100 22"><path d="M1 5l17-5 6 17-17 6z" fill="#e64d24"/><path d="M18 5q-9-2-10 2t6 4 3 5-9 1" fill="none" stroke="#fff" stroke-width="3"/><g fill="none" stroke="#1767ae" stroke-width="2"><path d="M30 9h10v6H30zM35 5v15"/></g><path d="M57 6q4 9-7 11 9 4 11-4 0-5-4-7z" fill="#1767ae"/><circle cx="66" cy="10" r="1.500" fill="#1767ae"/><path d="M70 13q3 1 0 5" stroke="#1767ae" stroke-width="2" fill="none"/><rect x="82" y="8" width="14" height="10" rx="2" fill="#1767ae"/><path d="M84 11h10M84 13h10" stroke="#fff" stroke-dasharray="2 1"/><path d="M86 16h6" stroke="#fff"/></svg></div>
</div>
</body>
</html>
```
FILE: styles.css
```css
* { box-sizing: border-box; }
body {
  margin: 0;
  height: 100vh;
  position: relative;
  display: flex;
  flex-direction: column;
  overflow: hidden;
  background: #f0f0f0;
  color: #111;
  font: 10px/15px "Noto Sans", "Noto Sans CJK SC", sans-serif;
}
button, input, select {
  margin: 0;
  padding: 0;
  border: 0;
  background: none;
  color: inherit;
  font: inherit;
}
button, svg { display: block; flex: none; }
.defs { position: absolute; width: 0; height: 0; }
.i14 { width: 14px; height: 14px; }
.i12 { width: 12px; height: 12px; }
.i8 { width: 8px; height: 8px; }

.titlebar {
  display: flex;
  align-items: center;
  gap: 3px;
  height: 20px;
  flex: none;
  border-top: 1px solid #45454a;
  background: #fff;
}
.titlebar h1 { margin: 0; font-size: 10px; font-weight: 400; white-space: nowrap; }
.menubar {
  display: flex;
  align-items: center;
  height: 15px;
  flex: none;
  padding-left: 3px;
  background: #fff;
}
.menus { display: flex; flex: 1; gap: 12px; padding-left: 6px; }
.menus button { white-space: nowrap; }
.ask {
  width: 61px;
  height: 15px;
  border-top: 1px solid #888;
  border-left: 1px solid #888;
  padding-left: 2px;
  background: #fff;
}
.ask::placeholder { color: #777; opacity: 1; }

.bars { flex: none; border-bottom: 1px solid #666; }
.bar-row { display: flex; gap: 3px; height: 24px; }
.bar {
  display: flex;
  align-items: center;
  padding: 1px 4px 0 2px;
  border-top: 1px solid #fff;
  border-right: 1px solid #bbb;
  border-bottom: 1px solid #bbb;
}
.grip {
  flex: none;
  align-self: stretch;
  width: 5px;
  margin: 1px 2px 1px 0;
  border: 1px solid #c4c4c4;
  border-width: 0 1px;
  background: #fafafa;
}
.icons { display: flex; align-items: center; gap: 5px; padding: 0 4px; }
.icons svg { width: 14px; height: 14px; }
.icons i { width: 1px; height: 16px; background: #999; }
.icons .drop { width: 6px; }
.icons .drop svg { width: 6px; height: 8px; }
.icons.tail { padding-right: 0; }
.icons.first { padding-left: 1px; }
.icons.std { padding: 0; }
.std i { margin-right: -1px; }
.combo {
  display: flex;
  align-items: center;
  gap: 2px;
  height: 19px;
  padding: 0 4px;
  border: 1px solid #999;
  background: #fff;
}
.bar .combo + .combo { margin-left: 4px; }
.combo select {
  flex: 1;
  min-width: 0;
  appearance: none;
  outline: 0;
  opacity: 1;
  font: 700 10px/15px "Liberation Serif", serif;
}
.combo select.cn { font: 10px/15px "Noto Sans CJK SC", sans-serif; }
.c-space { width: 143px; padding-left: 6px; }
.c-layer { width: 246px; }
.bar .c-color { width: 124px; margin-left: -2px; padding-left: 2px; }
.c-type { width: 132px; }
.c-weight { width: 103px; }
.c-plot { width: 98px; }
.off { border-color: #ccc; background: #f0f0f0; color: #777; }
.off svg { opacity: .4; }
.rule { width: 28px; height: 1px; background: #222; }
.rule.long { width: 49px; }

.main { display: flex; flex: 1; min-height: 0; }
.side { width: 67px; flex: none; overflow: hidden; border-right: 1px solid #999; background: #f2f2f2; }
.side-head { display: flex; align-items: center; gap: 3px; height: 15px; padding: 0 10px 0 3px; }
.side-head span { flex: 1; height: 4px; border: 1px solid #bbb; border-width: 1px 0; background: #fff; }
.side-head button { width: 9px; font-size: 8px; line-height: 10px; }
.group { padding: 2px 0 1px; margin-right: 6px; border-bottom: 1px solid #b5b5b5; }
.group.top { padding: 0; border-bottom: 1px solid #777; }
.group.cut { padding-bottom: 0; border: 0; }
.group.cut + .group { padding-top: 0; }
.group.last { border: 0; }
.row { display: flex; align-items: center; gap: 4px; width: 100%; height: 15px; }
.row svg { width: 14px; height: 14px; }
.row .mark { width: 8px; height: 10px; margin: 0 4px 0 2px; }
.row span { width: 40px; white-space: nowrap; text-align: justify; text-align-last: justify; }
.part { height: 8px; overflow: hidden; align-items: flex-start; }

.right { display: flex; flex: 1; flex-direction: column; min-width: 0; }
.work { display: flex; flex: 1; min-height: 0; }
.draw {
  display: flex;
  flex-direction: column;
  align-items: center;
  align-self: flex-start;
  gap: 4px;
  width: 22px;
  flex: none;
  margin-right: 2px;
  padding: 2px 0 4px;
  border-right: 1px solid #bbb;
  border-bottom: 1px solid #bbb;
}
.draw svg { width: 14px; height: 14px; }
.hgrip { width: 16px; height: 4px; border: 1px solid #c4c4c4; border-width: 1px 0; background: #fff; }
.mtext { font: 14px/14px "Open Sans", sans-serif; }
.view { display: flex; flex: 1; flex-direction: column; min-width: 0; }
.canvas { display: flex; flex: 1; align-items: flex-end; min-height: 0; background: #000; }
.ucs { width: 84px; height: 82px; }
.ucs text { fill: #bbb; font: 12px "Open Sans", sans-serif; text-anchor: middle; }
.tabs { display: flex; height: 13px; flex: none; border-bottom: 1px solid #aaa; }
.nav { width: 12px; border-right: 1px solid #bbb; color: #555; font: 6px/12px "DejaVu Sans", sans-serif; }
.tab { height: 12px; padding: 0 4px; line-height: 12px; }
.model { padding: 0 10px; background: #000; color: #fff; clip-path: polygon(0 0, 100% 0, 82% 100%, 18% 100%); }
.slash { width: 8px; height: 12px; }
.bottom { display: flex; flex: none; padding: 1px 0 2px; }
.bottom .bar { height: 24px; }
.wide { padding: 0 1px 0 2px; }
.wide i { margin: 0 -1px; }

.cmd { display: flex; flex: none; padding: 8px 0 0 6px; border-top: 2px solid #777; }
.cmd-box {
  flex: 1;
  padding-left: 2px;
  border: 1px solid #888;
  border-right: 0;
  border-bottom-color: #ccc;
  background: #fff;
  color: #333;
  font: 13px/18px "Noto Sans CJK SC", sans-serif;
}
.cmd-box p {
  height: 18px;
  margin: 0 0 0 -2px;
  padding-left: 2px;
  border-bottom: 1px solid #aaa;
  line-height: 14px;
  white-space: nowrap;
}
.cmd-box code { font: 11px/14px "Liberation Mono", monospace; }
.prompt { display: flex; height: 17px; }
.prompt input { flex: 1; outline: 0; }

.status { display: flex; flex: none; height: 15px; padding: 2px 0 0 3px; border-top: 1px solid #ccc; overflow: hidden; }
.status button { height: 17px; padding: 0 2px; margin-right: 1px; border-right: 1px solid #aaa; white-space: nowrap; }
.status .on { padding: 0 1px; border: 1px solid #777; border-width: 1px 1px 0; line-height: 14px; }
.status .ratio { display: flex; align-items: center; gap: 1px; width: 64px; padding: 0; border: 0; }
.status .coord { width: 104px; height: 17px; margin: 0 4px 0 0; border: 1px solid #aaa; border-bottom: 0; font: 10px/15px "Liberation Sans", sans-serif; white-space: nowrap; }
.status .code { font: 8px/17px "DejaVu Sans Mono", monospace; }

.overlay { position: absolute; right: 0; bottom: 0; width: 136px; height: 58px; overflow: hidden; pointer-events: none; }
.mark-text {
  position: absolute;
  right: 0;
  top: 0;
  font: 900 45px/46px "Noto Sans CJK SC", sans-serif;
  color: transparent;
  -webkit-text-stroke: 1px #bbb;
}
.site { position: absolute; left: 24px; bottom: 0; font: 13px/13px "Liberation Sans", sans-serif; color: #bbb; }
.ime { position: absolute; right: 4px; bottom: -3px; width: 100px; }
.ime svg { width: 100px; height: 22px; }
```
